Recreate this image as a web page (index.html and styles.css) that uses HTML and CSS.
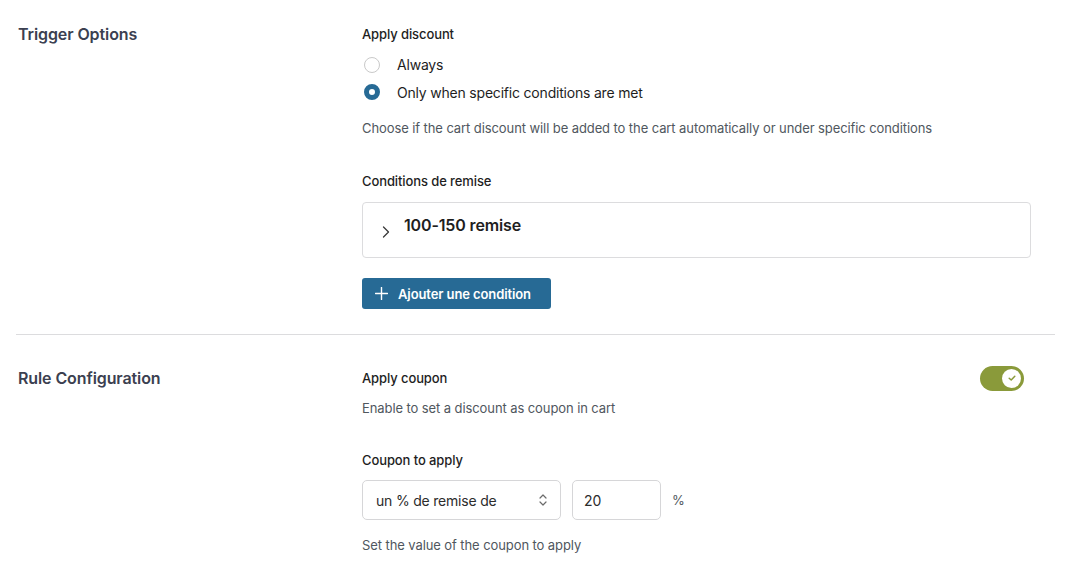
FILE: index.html
```html
<!DOCTYPE html>
<html lang="en">
<head>
<meta charset="utf-8">
<title>Discount rule</title>
<link rel="stylesheet" href="styles.css">
</head>
<body>
<main class="page">
  <section class="section section--trigger">
    <h2 class="section__title">Trigger Options</h2>
    <div class="section__body">
      <div class="field-label">Apply discount</div>
      <div class="radios">
        <label class="radio">
          <span class="radio__dot"></span>
          <span class="radio__text">Always</span>
        </label>
        <label class="radio radio--checked">
          <span class="radio__dot"></span>
          <span class="radio__text">Only when specific conditions are met</span>
        </label>
      </div>
      <p class="help help--radios">Choose if the cart discount will be added to the cart automatically or under specific conditions</p>

      <div class="field-label field-label--spaced">Conditions de remise</div>
      <div class="condition">
        <svg class="condition__chevron" width="10" height="14" viewBox="0 0 10 14" aria-hidden="true">
          <path d="M2.5 2 L7.5 7 L2.5 12" fill="none" stroke="#3a3a3a" stroke-width="1.3" stroke-linecap="round" stroke-linejoin="round"/>
        </svg>
        <span class="condition__title">100-150 remise</span>
      </div>

      <button class="btn-primary" type="button">
        <svg width="13" height="13" viewBox="0 0 13 13" aria-hidden="true">
          <path d="M6.5 0.5 V12.5 M0.5 6.5 H12.5" stroke="#fff" stroke-width="1.4" stroke-linecap="round"/>
        </svg>
        <span>Ajouter une condition</span>
      </button>
    </div>
  </section>

  <section class="section section--rule">
    <h2 class="section__title">Rule Configuration</h2>
    <div class="section__body">
      <div class="toggle-row">
        <div class="field-label">Apply coupon</div>
        <span class="toggle toggle--on">
          <span class="toggle__knob">
            <svg width="10" height="10" viewBox="0 0 10 10" aria-hidden="true">
              <path d="M2.2 5.2 L4.2 7 L7.8 3.2" fill="none" stroke="#8a9a3a" stroke-width="1.5" stroke-linecap="round" stroke-linejoin="round"/>
            </svg>
          </span>
        </span>
      </div>
      <p class="help help--toggle">Enable to set a discount as coupon in cart</p>

      <div class="field-label field-label--spaced2">Coupon to apply</div>
      <div class="coupon-row">
        <div class="select">
          <span>un % de remise de</span>
          <svg width="10" height="14" viewBox="0 0 10 14" aria-hidden="true">
            <path d="M2 5 L5 2 L8 5 M2 9 L5 12 L8 9" fill="none" stroke="#6b6b6b" stroke-width="1.2" stroke-linecap="round" stroke-linejoin="round"/>
          </svg>
        </div>
        <div class="input">20</div>
        <span class="unit">%</span>
      </div>
      <p class="help help--coupon">Set the value of the coupon to apply</p>
    </div>
  </section>
</main>
</body>
</html>
```

FILE: styles.css
```css
* {
  box-sizing: border-box;
}

html, body {
  margin: 0;
  background: #ffffff;
}

body {
  font-family: Inter, "Noto Sans", "Liberation Sans", sans-serif;
  color: #1e1e1e;
  -webkit-font-smoothing: antialiased;
}

.page {
  padding: 0 10px 0 16px;
}

.section {
  display: grid;
  grid-template-columns: 346px 1fr;
  padding-right: 24px;
}

.section--trigger {
  padding-top: 22px;
  padding-bottom: 25px;
  border-bottom: 1px solid #dcdcde;
}

.section--rule {
  padding-top: 31px;
  padding-right: 31px;
}

.section__title {
  margin: 0;
  padding-left: 2px;
  font-size: 16px;
  line-height: 24px;
  font-weight: 600;
  color: #3b4050;
  letter-spacing: -0.1px;
}

.field-label {
  font-size: 13px;
  line-height: 24px;
  font-weight: 500;
  color: #1e1e1e;
  letter-spacing: -0.1px;
}

.field-label--spaced {
  margin-top: 31px;
}

.field-label--spaced2 {
  margin-top: 30px;
}

.radios {
  margin-top: 5px;
  display: flex;
  flex-direction: column;
}

.radio {
  display: flex;
  align-items: center;
  height: 28px;
  gap: 17px;
  padding-left: 2px;
}

.radio:first-child {
  height: 27px;
}

.radio__dot {
  width: 16px;
  height: 16px;
  border-radius: 50%;
  border: 1px solid #c9c9c9;
  background: #fff;
  flex: none;
}

.radio--checked .radio__dot {
  border: 5px solid #276a95;
  background: #fff;
}

.radio__text {
  font-size: 14px;
  color: #1e1e1e;
  letter-spacing: -0.2px;
}

.help {
  margin: 0;
  font-size: 13px;
  line-height: 20px;
  color: #50575e;
  letter-spacing: -0.09px;
}

.help--radios {
  margin-top: 12px;
}

.help--toggle {
  margin-top: 8px;
}

.help--coupon {
  margin-top: 15px;
}

.condition {
  margin-top: 9px;
  height: 56px;
  border: 1px solid #dcdcde;
  border-radius: 4px;
  display: flex;
  align-items: center;
  padding: 0 0 2px 18px;
  gap: 13px;
}

.condition__chevron {
  margin-top: 5px;
}

.condition__title {
  font-size: 16px;
  font-weight: 600;
  color: #1e1e1e;
  margin-top: -8px;
  letter-spacing: -0.15px;
}

.btn-primary {
  margin-top: 20px;
  height: 31px;
  padding: 0 20px 0 13px;
  display: inline-flex;
  align-items: center;
  gap: 10px;
  border: 0;
  border-radius: 3px;
  background: #276a95;
  color: #fff;
  font-family: inherit;
  font-size: 13px;
  font-weight: 600;
  letter-spacing: -0.1px;
  cursor: pointer;
}

.toggle-row {
  display: flex;
  justify-content: space-between;
  align-items: center;
  height: 24px;
}

.toggle {
  width: 44px;
  height: 25px;
  border-radius: 13px;
  background: #8a9a3a;
  display: flex;
  align-items: center;
  justify-content: flex-end;
  padding-right: 3px;
}

.toggle__knob {
  width: 19px;
  height: 19px;
  border-radius: 50%;
  background: #fff;
  display: flex;
  align-items: center;
  justify-content: center;
}

.coupon-row {
  margin-top: 8px;
  display: flex;
  align-items: center;
  gap: 11px;
}

.select {
  width: 199px;
  height: 40px;
  border: 1px solid #d6d6d8;
  border-radius: 5px;
  display: flex;
  align-items: center;
  justify-content: space-between;
  padding: 0 12px 0 13px;
  font-size: 14px;
  color: #2c2c2c;
  letter-spacing: -0.2px;
}

.input {
  width: 89px;
  height: 40px;
  border: 1px solid #d6d6d8;
  border-radius: 5px;
  display: flex;
  align-items: center;
  padding-left: 11px;
  font-size: 14px;
  color: #2c2c2c;
}

.unit {
  margin-left: 0;
  font-size: 13px;
  color: #50575e;
}
```
